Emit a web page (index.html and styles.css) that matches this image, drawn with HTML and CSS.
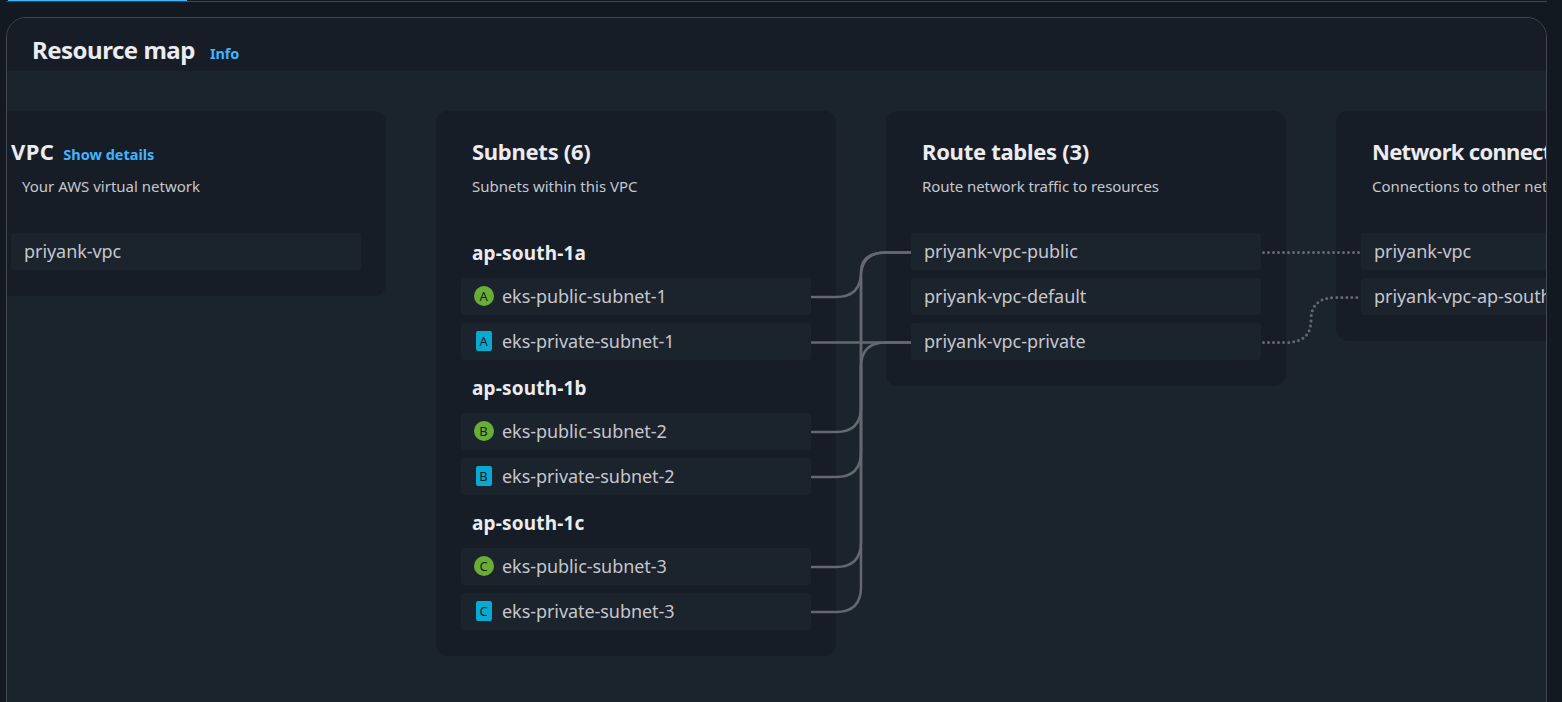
FILE: index.html
```html
<!DOCTYPE html>
<html lang="en">
<head>
<meta charset="utf-8">
<title>Resource map</title>
<link rel="stylesheet" href="styles.css">
</head>
<body>
<div class="tabs"><div class="tab-active"></div></div>
<main class="panel">
  <header class="panel-header"><h1>Resource map</h1><a class="link info">Info</a></header>
  <div class="map">
    <section class="card vpc">
      <div class="card-title"><h2>VPC</h2><a class="link">Show details</a></div>
      <p class="desc">Your AWS virtual network</p>
      <ul class="items"><li>priyank-vpc</li></ul>
    </section>
    <section class="card">
      <div class="card-title"><h2>Subnets (6)</h2></div>
      <p class="desc">Subnets within this VPC</p>
      <h3>ap-south-1a</h3>
      <ul class="items">
        <li><span class="badge public"><b>A</b></span>eks-public-subnet-1</li>
        <li><span class="badge private"><b>A</b></span>eks-private-subnet-1</li>
      </ul>
      <h3>ap-south-1b</h3>
      <ul class="items">
        <li><span class="badge public"><b>B</b></span>eks-public-subnet-2</li>
        <li><span class="badge private"><b>B</b></span>eks-private-subnet-2</li>
      </ul>
      <h3>ap-south-1c</h3>
      <ul class="items">
        <li><span class="badge public"><b>C</b></span>eks-public-subnet-3</li>
        <li><span class="badge private"><b>C</b></span>eks-private-subnet-3</li>
      </ul>
    </section>
    <section class="card">
      <div class="card-title"><h2>Route tables (3)</h2></div>
      <p class="desc routes-desc">Route network traffic to resources</p>
      <ul class="items"><li>priyank-vpc-public</li><li>priyank-vpc-default</li><li>priyank-vpc-private</li></ul>
    </section>
    <section class="card connections">
      <div class="card-title"><h2>Network connections (2)</h2></div>
      <p class="desc">Connections to other networks</p>
      <ul class="items"><li>priyank-vpc</li><li>priyank-vpc-ap-south-1a</li></ul>
    </section>
    <svg class="wires" width="1539" height="631" viewBox="7 71 1539 631">
      <g class="solid">
        <path d="M811 297H836Q861 297 861 272Q861 252.500 886 252.500H911"/>
        <path d="M811 342.500H911"/>
        <path d="M811 432H836Q861 432 861 407V277Q861 252.500 886 252.500H911"/>
        <path d="M811 477H836Q861 477 861 452V367Q861 342.500 886 342.500H911"/>
        <path d="M811 567H836Q861 567 861 542V277"/>
        <path d="M811 612H836Q861 612 861 587V367"/>
      </g>
      <g class="dotted">
        <path d="M1263.500 252.500H1361"/>
        <path d="M1263.500 342.500H1286Q1311 342.500 1311 320Q1311 297.500 1336 297.500H1361"/>
      </g>
    </svg>
  </div>
</main>
</body>
</html>
```
FILE: styles.css
```css
* { box-sizing: border-box; }
body {
  margin: 0;
  height: 702px;
  overflow: hidden;
  background: #131920;
  color: #c6c6cd;
  font-family: "Noto Sans", "Open Sans", sans-serif;
  font-size: 18px;
}
h1, h2, h3, p, ul { margin: 0; padding: 0; }
h1, h2, h3 { color: #ebebf0; font-weight: 700; white-space: nowrap; }
.tabs { height: 2px; margin: 0 15px 15px 6px; border-bottom: 1px solid #424650; }
.tab-active { width: 179px; height: 1px; margin-left: 2px; background: #42b4ff; }
.panel {
  height: 720px;
  margin: 0 15px 0 6px;
  border: 1px solid #424650;
  border-radius: 20px;
  overflow: hidden;
  background: #1b232d;
}
.panel-header {
  display: flex;
  align-items: baseline;
  gap: 15px;
  height: 53px;
  padding: 14px 26px 0 25px;
  background: #161d26;
}
h1 { font-size: 24px; line-height: 36px; letter-spacing: -0.5px; }
.link { color: #42b4ff; font-size: 14.5px; font-weight: 700; line-height: 20px; }
.info { letter-spacing: -0.1px; }
.map {
  position: relative;
  display: flex;
  align-items: flex-start;
  gap: 50px;
  height: 640px;
  margin-left: -21px;
  padding-top: 40px;
}
.card {
  flex: 0 0 400px;
  padding: 23px 25px 26px;
  border-radius: 12px;
  background: #161d26;
}
.card-title { display: flex; align-items: baseline; gap: 9px; height: 36px; padding-left: 11px; }
.vpc .card-title { padding-left: 0; }
h2 { font-size: 22px; line-height: 34px; letter-spacing: -0.28px; }
.vpc h2 { letter-spacing: 0.4px; }
.connections h2 { letter-spacing: -0.7px; }
.desc {
  height: 63px;
  padding: 5px 0 0 11px;
  font-size: 15px;
  line-height: 22px;
  white-space: nowrap;
}
.routes-desc { letter-spacing: -0.08px; }
h3 { height: 45px; padding-left: 11px; font-size: 19px; line-height: 41px; letter-spacing: 0.18px; }
.items { display: grid; gap: 8px; list-style: none; }
.items + h3 { line-height: 57px; }
.items li {
  display: flex;
  align-items: center;
  height: 37px;
  padding: 0 13px 2px;
  border-radius: 3px;
  background: #1b232d;
  letter-spacing: -0.06px;
  white-space: nowrap;
}
.items + h3 { height: 53px; }
.badge {
  display: flex;
  align-items: center;
  justify-content: center;
  height: 20px;
  margin-top: 1px;
  color: #161d26;
  font-size: 13px;
}
.badge b { font-weight: 400; margin: -1px 1px 0 0; }
.public { width: 20px; margin-right: 8px; border-radius: 50%; background: #69ae34; }
.private { width: 16px; margin: 1px 10px 0 2px; border-radius: 2px; background: #08aad2; }
.wires { position: absolute; top: 0; left: 21px; fill: none; pointer-events: none; }
.solid { stroke: #656871; stroke-width: 2.5; }
.dotted { stroke: #656871; stroke-width: 3; stroke-linecap: round; stroke-dasharray: 0 5; }
```
